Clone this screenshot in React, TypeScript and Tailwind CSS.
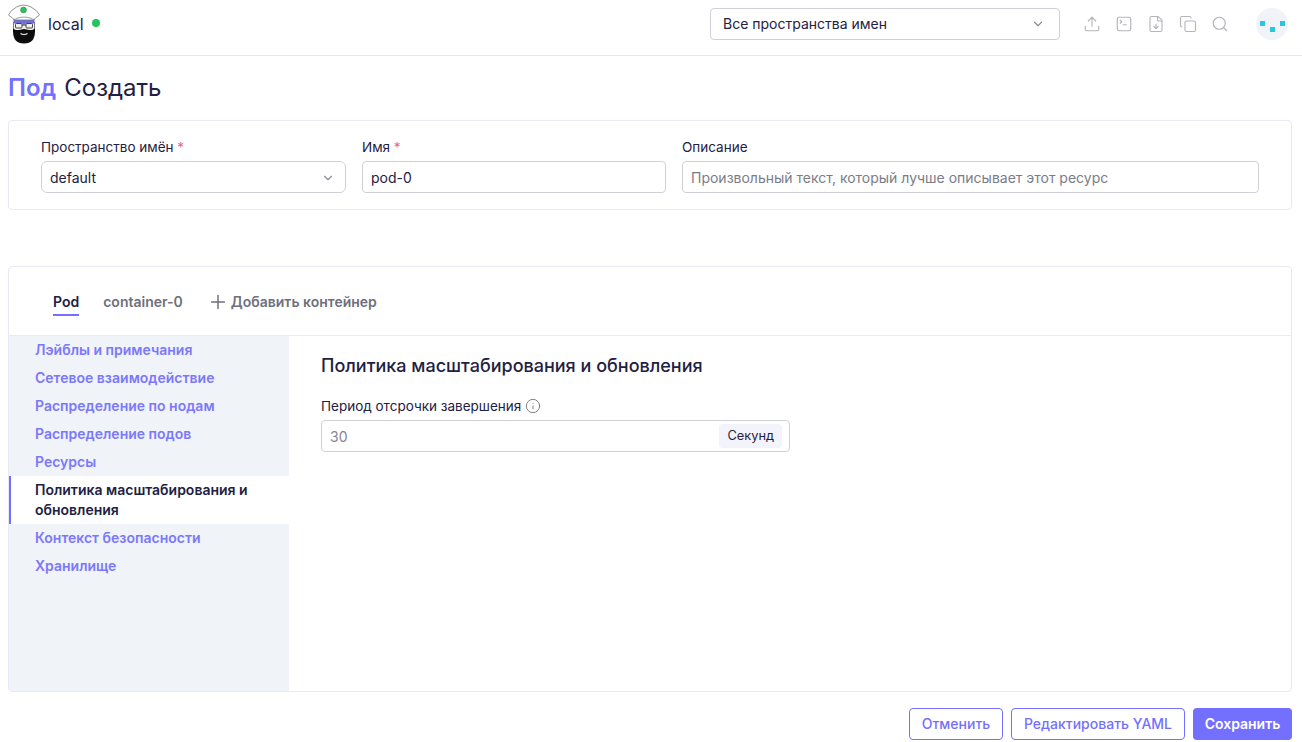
import React from "react";
import { ChevronDown, Plus, Upload, SquareTerminal, FileDown, Copy, Search, Info } from "lucide-react";

const Logo = () => (
  <svg width="32" height="40" viewBox="0 0 32 40" className="shrink-0">
    <path d="M5 18 V27 Q5 39.5 16 39.5 Q27 39.5 27 27 V18 Z" fill="#0d0d0d" />
    <rect x="5.5" y="14" width="21" height="12" fill="#f2f0ee" />
    <path d="M5.5 14 H26.5 V19.5 H18 L16 21 L14 19.5 H5.5 Z" fill="#6f6ee0" />
    <path d="M5 24.5 Q8 27 11 26 L16 25 L21 26 Q24 27 27 24.5 V28 H5 Z" fill="#0d0d0d" />
    <path d="M12.5 29.5 Q16 31.5 19.5 29.5" stroke="#fff" strokeWidth="1.2" fill="none" />
    <rect x="7.5" y="19.5" width="6.5" height="4.5" rx="1" fill="#f2f0ee" stroke="#333" strokeWidth="0.9" />
    <rect x="18" y="19.5" width="6.5" height="4.5" rx="1" fill="#f2f0ee" stroke="#333" strokeWidth="0.9" />
    <path d="M14 21 H18" stroke="#333" strokeWidth="0.9" />
    <path d="M0.7 10.5 Q3 6 8.5 3 Q15.5 -0.8 23 3 Q29 6 31.3 10.5 Q31.5 12 28 13.5 L25.5 16 H6.5 L4 13.5 Q0.5 12 0.7 10.5 Z" fill="#fff" stroke="#777" strokeWidth="0.8" />
    <path d="M6 15.5 Q16 10.5 26 15.5" fill="none" stroke="#888" strokeWidth="0.8" />
    <circle cx="15.5" cy="6" r="3" fill="#22c55e" stroke="#555" strokeWidth="0.4" />
  </svg>
);

const items = [
  "Лэйблы и примечания",
  "Сетевое взаимодействие",
  "Распределение по нодам",
  "Распределение подов",
  "Ресурсы",
  "Политика масштабирования и обновления",
  "Контекст безопасности",
  "Хранилище",
];

export default function App() {
  return (
    <div className="h-[742px] w-[1302px] overflow-hidden bg-white font-['Inter',sans-serif] text-[#1e2142]">
      <header className="h-[56px] border-b border-[#e6e6f0] pl-2 pr-[14px]">
        <div className="flex h-12 items-center">
          <Logo />
          <span className="ml-2 text-[16px] leading-6">local</span>
          <span className="mb-[2px] ml-2 h-2 w-2 rounded-full bg-[#22c55e]" />
          <div className="ml-auto flex h-8 w-[350px] items-center justify-between rounded border border-[#d0d0db] pl-3 pr-[14px] text-sm">
            <span>Все пространства имен</span>
            <ChevronDown size={14} className="text-[#8c8c99]" />
          </div>
          <div className="ml-[23px] flex items-center gap-[14px] text-[#b4b4bc]">
            <Upload size={18} strokeWidth={1.5} />
            <SquareTerminal size={18} strokeWidth={1.5} />
            <FileDown size={18} strokeWidth={1.5} />
            <Copy size={18} strokeWidth={1.5} />
            <Search size={18} strokeWidth={1.5} />
          </div>
          <div className="ml-[27px] flex h-8 w-8 items-start justify-center gap-[5px] rounded-full bg-[#f0f3f8] pt-[13px]">
            <span className="h-[5px] w-[5px] bg-[#2bc5e0]" />
            <span className="mt-[6px] h-[5px] w-[5px] bg-[#2bc5e0]" />
            <span className="h-[5px] w-[5px] bg-[#2bc5e0]" />
          </div>
        </div>
      </header>

      <main className="pl-2 pr-[10px]">
        <h1 className="flex h-[64px] items-center gap-2 text-2xl">
          <span className="font-semibold text-[#7370ff]">Под</span>
          <span>Создать</span>
        </h1>

        <section className="flex h-[90px] gap-4 rounded border border-[#e8e8f6] px-8 pt-[14px]">
          <div className="w-[305px]">
            <div className="h-[26px] text-[13.5px] leading-[24px]">
              Пространство имён <span className="text-[#e8639c]">*</span>
            </div>
            <div className="flex h-8 items-center justify-between rounded-md border border-[#d0d0db] pl-2 pr-[10px] pt-px text-sm">
              <span>default</span>
              <ChevronDown size={14} className="text-[#8c8c99]" />
            </div>
          </div>
          <div className="w-[304px]">
            <div className="h-[26px] text-[13.5px] leading-[24px]">
              Имя <span className="text-[#e8639c]">*</span>
            </div>
            <div className="flex h-8 items-center rounded border border-[#d0d0db] pl-2 pt-px text-sm">pod-0</div>
          </div>
          <div className="flex-1">
            <div className="h-[26px] text-[13.5px] leading-[24px]">Описание</div>
            <div className="flex h-8 items-center rounded border border-[#d0d0db] pl-2 pt-px text-sm text-[#7c7c88]">
              Произвольный текст, который лучше описывает этот ресурс
            </div>
          </div>
        </section>

        <section className="mt-[56px] h-[426px] rounded border border-[#e8e8f6]">
          <div className="flex h-[69px] items-center border-b border-[#e8e8f6] pl-[44px] pt-px text-sm font-semibold">
            <div className="relative">
              <span>Pod</span>
              <span className="absolute -bottom-[4px] left-0 h-[2px] w-full bg-[#7370ff]" />
            </div>
            <span className="ml-6 text-[#6f6f7d]">container-0</span>
            <span className="ml-[24px] flex items-center gap-[2px] text-[#6f6f7d]">
              <Plus size={22} strokeWidth={1.6} />
              Добавить контейнер
            </span>
          </div>
          <div className="flex h-[355px]">
            <nav className="w-[280px] rounded-bl bg-[#f0f3f8] text-sm font-semibold text-[#7b78fa]">
              {items.map((t, i) =>
                i === 5 ? (
                  <div key={t} className="border-l-2 border-[#7370ff] bg-white py-1 pl-6 pr-4 leading-5 text-[#1e2142]">
                    {t}
                  </div>
                ) : (
                  <div key={t} className="flex h-7 items-center pl-[26px]">
                    {t}
                  </div>
                ),
              )}
            </nav>
            <div className="flex-1 pl-8 pt-[18px]">
              <h2 className="text-[18px] font-medium leading-6">Политика масштабирования и обновления</h2>
              <div className="mt-[17px] flex h-[22px] items-center gap-[4px] text-[13.5px]">
                Период отсрочки завершения
                <Info size={16} strokeWidth={1.25} className="text-[#66667a]" />
              </div>
              <div className="mt-[3px] flex h-8 w-[469px] items-center justify-between rounded border border-[#d0d0db] pl-2 pr-[7px]">
                <span className="pt-[2px] text-sm text-[#85858f]">30</span>
                <span className="flex h-6 items-center rounded bg-[#f3f3fc] px-2 text-[12.8px]">Секунд</span>
              </div>
            </div>
          </div>
        </section>

        <footer className="mt-4 flex justify-end gap-2 text-sm font-medium leading-none">
          <button className="h-8 w-[94px] rounded border border-[#7370ff] text-[#7370ff]">Отменить</button>
          <button className="h-8 w-[174px] rounded border border-[#7370ff] text-[#7370ff]">Редактировать YAML</button>
          <button className="h-8 w-[99px] rounded bg-[#7370ff] font-semibold text-white">Сохранить</button>
        </footer>
      </main>
    </div>
  );
}
